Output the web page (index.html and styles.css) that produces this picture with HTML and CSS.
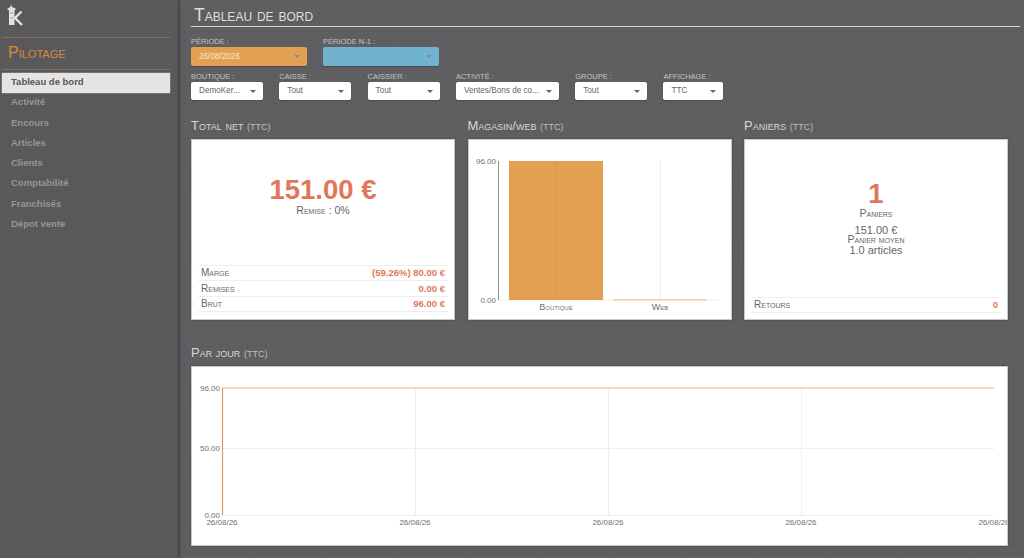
FILE: index.html
```html
<!DOCTYPE html>
<html lang="fr">
<head>
  <meta charset="UTF-8">
  <meta name="viewport" content="width=device-width, initial-scale=1.0">
  <title>Tableau de bord</title>
  <link rel="stylesheet" href="styles.css">
</head>
<body>
  <aside class="sidebar">
    <div class="logo">
      <svg width="18" height="22" viewBox="0 0 18 22">
        <path d="M4 0 L5 3 L8.500 4.500 L8.500 6 L7.500 6 L7.500 21 L2 21 L2 6 L0.500 6 L0.500 4.500 L3.500 3 Z" fill="#e2e2e2"/>
        <path d="M3.500 9 H6 M3.500 14 H6" stroke="#8f8f8f" stroke-width="1.200"/>
        <path d="M14.500 7.500 L8 14 L15 21" fill="none" stroke="#e2e2e2" stroke-width="2.400"/>
      </svg>
    </div>
    <h2 class="side-title">Pilotage</h2>
    <nav class="side-nav">
      <a class="active">Tableau de bord</a>
      <a>Activité</a>
      <a>Encours</a>
      <a>Articles</a>
      <a>Clients</a>
      <a>Comptabilité</a>
      <a>Franchisés</a>
      <a>Dépot vente</a>
    </nav>
  </aside>

  <main class="content">
    <h1 class="page-title">Tableau de bord</h1>

    <section class="filters periods">
      <div class="field wide">
        <label>Période :</label>
        <div class="select orange"><span>26/08/2026</span></div>
      </div>
      <div class="field wide">
        <label>Période N-1 :</label>
        <div class="select blue"><span></span></div>
      </div>
    </section>

    <section class="filters">
      <div class="field"><label>Boutique :</label><div class="select"><span>DemoKer...</span></div></div>
      <div class="field"><label>Caisse :</label><div class="select"><span>Tout</span></div></div>
      <div class="field"><label>Caissier :</label><div class="select"><span>Tout</span></div></div>
      <div class="field activity"><label>Activité :</label><div class="select"><span>Ventes/Bons de co...</span></div></div>
      <div class="field"><label>Groupe :</label><div class="select"><span>Tout</span></div></div>
      <div class="field display"><label>Affichage :</label><div class="select"><span>TTC</span></div></div>
    </section>

    <section class="cards">
      <div class="block">
        <h3 class="block-title">Total net <small>(TTC)</small></h3>
        <div class="card">
          <div class="stat stat-total">
            <div class="big">151.00 €</div>
            <div class="sub">Remise : 0%</div>
          </div>
          <table class="rows">
            <tr><td>Marge</td><td>(59.26%) 80.00 €</td></tr>
            <tr><td>Remises</td><td>0.00 €</td></tr>
            <tr><td>Brut</td><td>96.00 €</td></tr>
          </table>
        </div>
      </div>

      <div class="block">
        <h3 class="block-title">Magasin/web <small>(TTC)</small></h3>
        <div class="card">
          <svg class="chart" width="264" height="181" viewBox="0 0 264 181">
            <path d="M192.500 22 V161 M30 161 H251" stroke="#eeeeee" stroke-width="1"/>
            <rect x="41" y="22" width="94" height="139" fill="#e3a052"/>
            <path d="M88.500 22 V161" stroke="#dc9a4e" stroke-width="1"/>
            <rect x="145" y="160" width="94" height="1.500" fill="#f4d3a8"/>
            <path d="M30.500 22 V161" stroke="#8f8f8f" stroke-width="1"/>
            <text class="tick" x="28" y="25" text-anchor="end">96.00</text>
            <text class="tick" x="28" y="164" text-anchor="end">0.00</text>
            <text class="tick caps" x="88" y="171" text-anchor="middle">Boutique</text>
            <text class="tick caps" x="192" y="171" text-anchor="middle">Web</text>
          </svg>
        </div>
      </div>

      <div class="block">
        <h3 class="block-title">Paniers <small>(TTC)</small></h3>
        <div class="card">
          <div class="stat stat-baskets">
            <div class="big">1</div>
            <div class="sub">Paniers</div>
            <div class="sub amount">151.00 €</div>
            <div class="sub mean">Panier moyen</div>
            <div class="sub count">1.0 articles</div>
          </div>
          <table class="rows">
            <tr><td>Retours</td><td>0</td></tr>
          </table>
        </div>
      </div>
    </section>

    <section class="daily">
      <h3 class="block-title">Par jour <small>(TTC)</small></h3>
      <div class="card">
        <svg class="chart" width="817" height="180" viewBox="0 0 817 180">
          <path d="M31 82.500 H803 M31 149.500 H803 M224.500 22 V149 M417.500 22 V149 M610.500 22 V149" stroke="#efefef" stroke-width="1"/>
          <path d="M31 22 H803" stroke="#f5c99b" stroke-width="1.500"/>
          <path d="M31.500 22 V149" stroke="#dc9a62" stroke-width="1.200"/>
          <text class="tick" x="29" y="25" text-anchor="end">96.00</text>
          <text class="tick" x="29" y="85" text-anchor="end">50.00</text>
          <text class="tick" x="29" y="152" text-anchor="end">0.00</text>
          <text class="tick" x="31" y="159" text-anchor="middle">26/08/26</text>
          <text class="tick" x="224" y="159" text-anchor="middle">26/08/26</text>
          <text class="tick" x="417" y="159" text-anchor="middle">26/08/26</text>
          <text class="tick" x="610" y="159" text-anchor="middle">26/08/26</text>
          <text class="tick" x="803" y="159" text-anchor="middle">26/08/26</text>
        </svg>
      </div>
    </section>
  </main>
</body>
</html>
```

FILE: styles.css
```css
* { box-sizing: border-box; }
html, body { height: 100%; }
body { margin: 0; display: flex; overflow: hidden; font-family: "Liberation Sans", Arial, sans-serif;
  background-color: #5f5f61;
  background-image: radial-gradient(circle, #555557 0.8px, transparent 1.1px);
  background-size: 9px 9px; }

/* sidebar */
.sidebar { width: 178px; flex: none; background: #59595b; padding: 0 8px 0 2px;
  box-shadow: 1px 0 3px rgba(0,0,0,0.45); }
.logo { height: 37px; padding: 4px 0 0 5px; }
.logo svg { display: block; }
.side-title { margin: 0; height: 33px; padding-left: 6px; line-height: 30px;
  border-top: 1px solid #8d6c48; border-bottom: 1px solid #8d6c48;
  font-size: 16px; font-weight: normal; font-variant: small-caps; color: #d9893c; }
.side-nav { margin-top: 3px; display: flex; flex-direction: column; }
.side-nav a { height: 20.3px; line-height: 18.6px; padding-left: 9px; font-size: 9.5px; font-weight: bold; color: #969697; }
.side-nav a.active { background: #e4e4e4; color: #58585a; box-shadow: 0 0 1px #fff; }

/* main */
.content { flex: 1; padding: 0 4px 0 13px; min-width: 0; }
.page-title { margin: 0; height: 27px; padding: 6px 0 0 3px; line-height: 18px;
  border-bottom: 1px solid #d4d4d4; font-size: 17.5px; font-weight: normal;
  font-variant: small-caps; color: #dedede; }

.filters { display: flex; gap: 16.3px; }
.periods { gap: 16.5px; margin-top: 11px; margin-bottom: 7px; }
.field { width: 72px; }
.field.wide { width: 115.5px; }
.field.activity { width: 103px; }
.field.display { width: 60px; }
.field label { display: block; height: 8px; line-height: 8px; font-size: 7.5px; color: #c4c4c4; text-transform: uppercase; }
.select { position: relative; height: 18px; margin-top: 1px; padding-left: 8px; line-height: 18px; background: #fff;
  border-radius: 2px; font-size: 8.2px; color: #666; white-space: nowrap; box-shadow: 0 1px 1px rgba(0,0,0,0.2); }
.periods .select { height: 19px; line-height: 19px; }
.select::after { content: ""; position: absolute; right: 7px; top: 8px; border: 3px solid transparent;
  border-top-color: #666; border-bottom: 0; }
.select.orange { background: #e3a052; color: #f6e7d2; }
.select.blue { background: #71b3cf; }
.select.orange::after, .select.blue::after { border-top-color: #8a8a8a; }

/* cards */
.cards { display: grid; grid-template-columns: repeat(3, 264px); column-gap: 12.5px; margin-top: 17px; }
.block-title { margin: 0 0 5px; height: 17px; line-height: 17px; font-size: 13px; font-weight: normal;
  font-variant: small-caps; color: #d6d6d6; }
.block-title small { font-size: 9px; color: #bdbdbd; }
.card { display: flex; flex-direction: column; height: 181px; background: #fff; overflow: hidden;
  border: 1px solid #c8c8c8; box-shadow: 0 0 2px rgba(0,0,0,0.3); }
.chart { display: block; flex: none; margin: -1px; }
.chart .tick { font-size: 8px; fill: #707070; }
.chart .caps { font-variant: small-caps; font-size: 9px; }

.stat { text-align: center; color: #666; }
.stat-total { padding-top: 36px; }
.stat-baskets { padding-top: 40px; }
.big { font-size: 27.5px; line-height: 28px; font-weight: bold; color: #e0775a; }
.sub { font-size: 10.5px; line-height: 13px; font-variant: small-caps; }
.stat-baskets .sub { margin-top: -1px; }
.stat-baskets .amount { margin-top: 6px; line-height: 9px; font-size: 11px; }
.stat-baskets .mean { margin-top: 0; line-height: 9px; }
.stat-baskets .count { margin-top: 0; font-size: 11px; font-variant: normal; }

.rows { margin: auto 6px 6px; border-collapse: collapse; font-size: 10px; color: #666; }
.stat-total + .rows { margin-bottom: 7px; }
.rows td { height: 15.500px; padding: 0 3px; border-top: 1px solid #eeeeee; border-bottom: 1px solid #eeeeee;
  font-variant: small-caps; }
.rows td:last-child { text-align: right; font-weight: bold; color: #e0775a; font-size: 9.5px; font-variant: normal; }

.daily { margin-top: 24px; width: 817px; }
.daily .card { height: 180px; }
```
